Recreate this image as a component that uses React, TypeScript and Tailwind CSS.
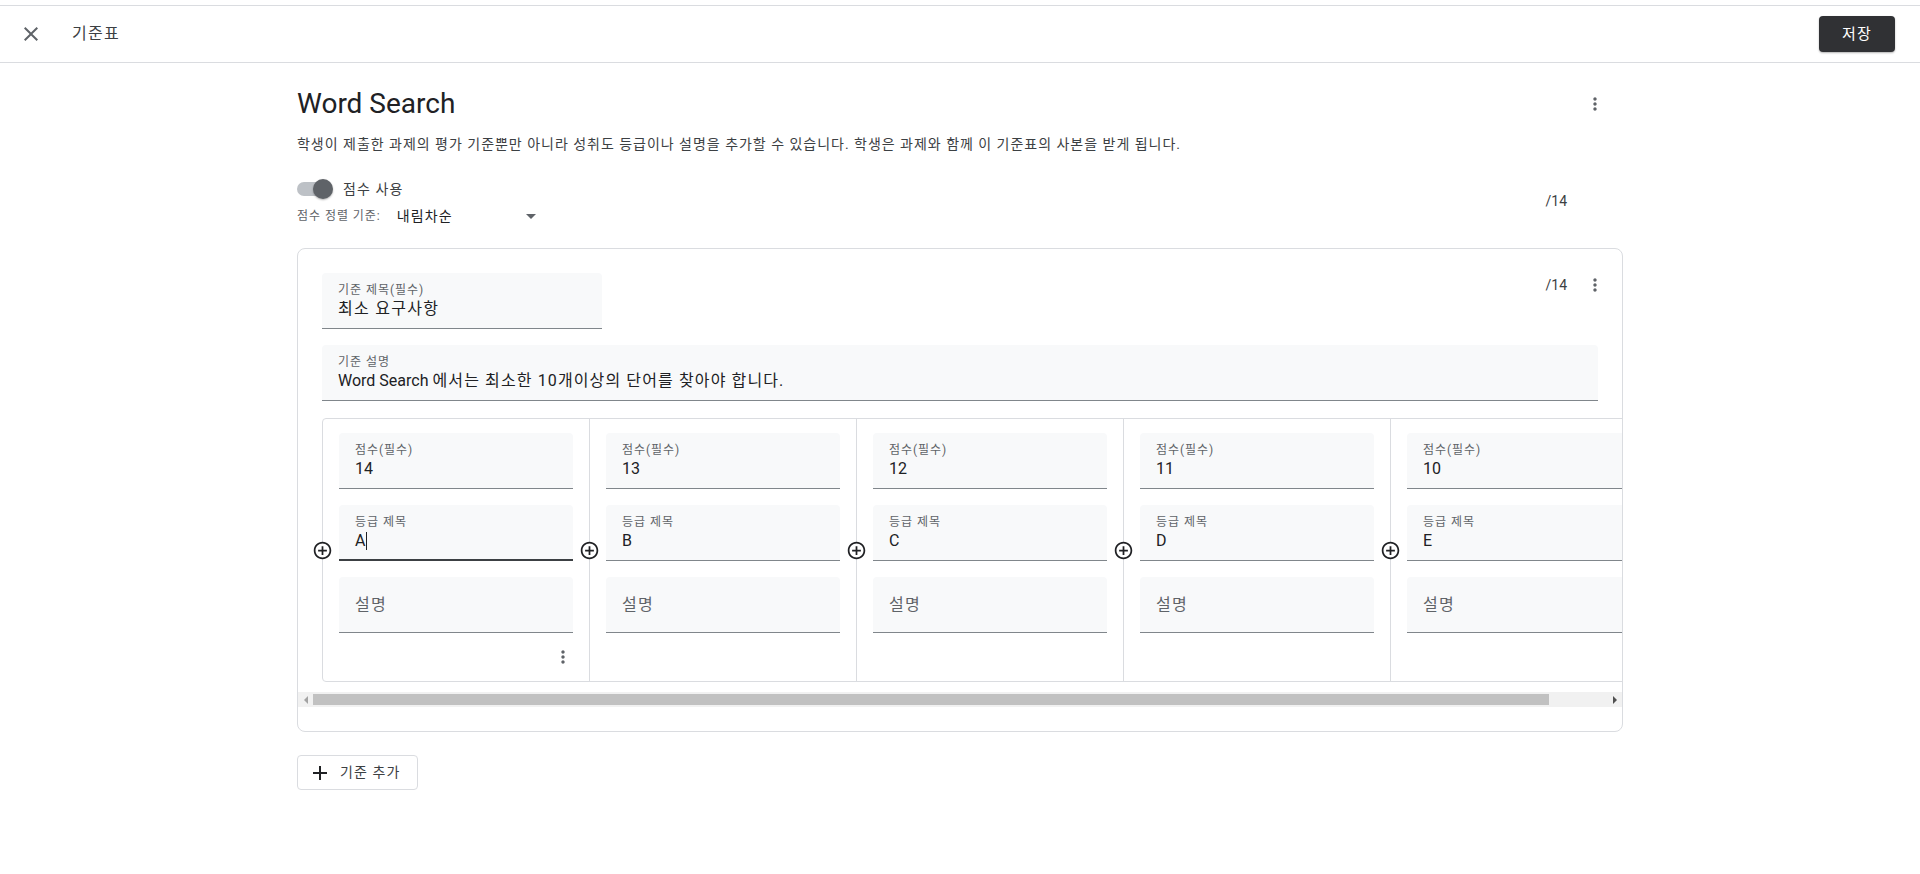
import React from "react";

const FONT = "font-['Roboto','Noto_Sans_CJK_KR',sans-serif]";
const KO = "tracking-[0.08em]";

function MoreVert() {
  return (
    <svg width="20" height="20" viewBox="0 0 24 24" fill="#5f6368">
      <path d="M12 8c1.1 0 2-.9 2-2s-.9-2-2-2-2 .9-2 2 .9 2 2 2zm0 2c-1.1 0-2 .9-2 2s.9 2 2 2 2-.9 2-2-.9-2-2-2zm0 6c-1.1 0-2 .9-2 2s.9 2 2 2 2-.9 2-2-.9-2-2-2z" />
    </svg>
  );
}

function AddCircle() {
  return (
    <svg width="21" height="21" viewBox="0 0 24 24">
      <circle cx="12" cy="12" r="9.5" fill="#ffffff" />
      <path
        fill="#202124"
        d="M13 7h-2v4H7v2h4v4h2v-4h4v-2h-4V7zm-1-5C6.48 2 2 6.48 2 12s4.48 10 10 10 10-4.48 10-10S17.52 2 12 2zm0 18c-4.41 0-8-3.59-8-8s3.59-8 8-8 8 3.59 8 8-3.59 8-8 8z"
      />
    </svg>
  );
}

function Field({
  label,
  value,
  focused,
  className = "",
}: {
  label: string;
  value: React.ReactNode;
  focused?: boolean;
  className?: string;
}) {
  return (
    <div
      className={`h-14 rounded-t-[4px] bg-[#f8f9fa] px-4 pt-[10px] ${
        focused ? "border-b-2 border-[#3c4043]" : "border-b border-[#80868b]"
      } ${className}`}
    >
      <div className={`text-[12px] leading-[14px] text-[#5f6368] ${KO}`}>{label}</div>
      <div className="mt-[2px] flex items-center text-[16px] leading-5 text-[#202124]">
        <span>{value}</span>
        {focused && <span className="ml-[1px] inline-block h-[18px] w-px bg-[#202124]" />}
      </div>
    </div>
  );
}

function PlaceholderField({ text }: { text: string }) {
  return (
    <div
      className={`flex h-14 items-center rounded-t-[4px] border-b border-[#80868b] bg-[#f8f9fa] px-4 text-[16px] text-[#5f6368] ${KO}`}
    >
      {text}
    </div>
  );
}

const levels = [
  { score: "14", grade: "A" },
  { score: "13", grade: "B" },
  { score: "12", grade: "C" },
  { score: "11", grade: "D" },
  { score: "10", grade: "E" },
];

export default function App() {
  return (
    <div className={`min-h-screen bg-white pt-[5px] ${FONT}`}>
      <header className="flex h-[58px] items-center border-y border-[#dadce0] bg-white pl-[19px] pr-[25px]">
        <svg width="24" height="24" viewBox="0 0 24 24" fill="#5f6368">
          <path d="M19 6.41L17.59 5 12 10.59 6.41 5 5 6.41 10.59 12 5 17.59 6.41 19 12 13.41 17.59 19 19 17.59 13.41 12z" />
        </svg>
        <span className={`ml-[29px] text-[16px] text-[#3c4043] ${KO}`}>기준표</span>
        <button
          className={`ml-auto h-9 w-[76px] rounded-[4px] bg-[#303134] text-[15px] text-white shadow-[0_1px_2px_rgba(0,0,0,0.3)] ${KO}`}
        >
          저장
        </button>
      </header>

      <main className="mx-auto w-[1326px] pt-[23px]">
        <div className="flex items-center justify-between">
          <h1 className="text-[28px] font-normal leading-9 text-[#202124]">Word Search</h1>
          <div className="mr-4 flex h-6 w-6 items-center justify-center">
            <MoreVert />
          </div>
        </div>
        <p className="mt-[12px] text-[14px] leading-5 tracking-[0.07em] text-[#3c4043]">
          학생이 제출한 과제의 평가 기준뿐만 아니라 성취도 등급이나 설명을 추가할 수 있습니다. 학생은 과제와 함께 이 기준표의 사본을 받게 됩니다.
        </p>

        <div className="mt-[23px] flex items-center justify-between">
          <div>
            <div className="flex h-6 items-center">
              <div className="relative h-[14px] w-[35px] rounded-full bg-[#bdc1c6]">
                <div className="absolute left-[16px] top-[-3px] h-5 w-5 rounded-full bg-[#5f6368] shadow-[0_1px_2px_rgba(0,0,0,0.3)]" />
              </div>
              <span className={`ml-[11px] text-[14px] text-[#3c4043] ${KO}`}>점수 사용</span>
            </div>
            <div className="mt-[5px] flex h-5 items-center">
              <span className={`text-[12px] text-[#5f6368] ${KO}`}>점수 정렬 기준:</span>
              <span className={`ml-4 text-[14px] text-[#202124] ${KO}`}>내림차순</span>
              <span className="ml-[73px] h-0 w-0 border-x-[5px] border-t-[5px] border-x-transparent border-t-[#5f6368]" />
            </div>
          </div>
          <span className="mr-[56px] text-[14px] text-[#3c4043]">/14</span>
        </div>

        <section className="mt-[22px] rounded-[8px] border border-[#dadce0] pb-6 pt-6">
          <div className="flex items-start justify-between px-6">
            <Field
              label="기준 제목(필수)"
              value={<span className={KO}>최소 요구사항</span>}
              className="w-[280px]"
            />
            <div className="-mr-[9px] flex h-6 items-center">
              <span className="text-[14px] text-[#3c4043]">/14</span>
              <div className="ml-4 flex h-6 w-6 items-center justify-center">
                <MoreVert />
              </div>
            </div>
          </div>
          <div className="mt-4 px-6">
            <Field
              label="기준 설명"
              value={
                <>
                  Word Search <span className="tracking-[0.07em]">에서는 최소한 10개이상의 단어를 찾아야 합니다.</span>
                </>
              }
            />
          </div>

          <div className="mt-[17px] overflow-hidden">
            <div className="flex w-max px-6">
              <div className="flex rounded-l-[4px] border border-[#dadce0]">
                {levels.map((l, i) => (
                  <div
                    key={l.score}
                    className={`relative shrink-0 px-4 pt-[14px] ${
                      i === 0 ? "w-[266px]" : "w-[267px] border-l border-[#dadce0]"
                    }`}
                  >
                    <div className="absolute -left-[11px] top-[121px]">
                      <AddCircle />
                    </div>
                    <div className="flex flex-col gap-4">
                      <Field label="점수(필수)" value={l.score} />
                      <Field label="등급 제목" value={l.grade} focused={i === 0} />
                      <PlaceholderField text="설명" />
                    </div>
                    <div className="flex h-12 items-center justify-end">
                      {i === 0 && (
                        <div className="-mr-[2px] flex h-6 w-6 items-center justify-center">
                          <MoreVert />
                        </div>
                      )}
                    </div>
                  </div>
                ))}
              </div>
            </div>
          </div>

          <div className="mt-[10px] flex h-[15px] items-center bg-[#f1f1f1]">
            <div className="flex h-full w-[15px] items-center justify-center">
              <span className="h-0 w-0 border-y-[4px] border-r-[4px] border-y-transparent border-r-[#a3a3a3]" />
            </div>
            <div className="h-[11px] w-[1236px] bg-[#c1c1c1]" />
            <div className="flex-1" />
            <div className="flex h-full w-[15px] items-center justify-center">
              <span className="h-0 w-0 border-y-[4px] border-l-[4px] border-y-transparent border-l-[#505050]" />
            </div>
          </div>
        </section>

        <button className="mt-[23px] flex h-[35px] items-center rounded-[4px] border border-[#dadce0] bg-white pl-[10px] pr-[16px]">
          <svg width="24" height="24" viewBox="0 0 24 24" fill="#202124">
            <path d="M19 13h-6v6h-2v-6H5v-2h6V5h2v6h6v2z" />
          </svg>
          <span className={`ml-2 text-[14px] text-[#3c4043] ${KO}`}>기준 추가</span>
        </button>
      </main>
    </div>
  );
}
